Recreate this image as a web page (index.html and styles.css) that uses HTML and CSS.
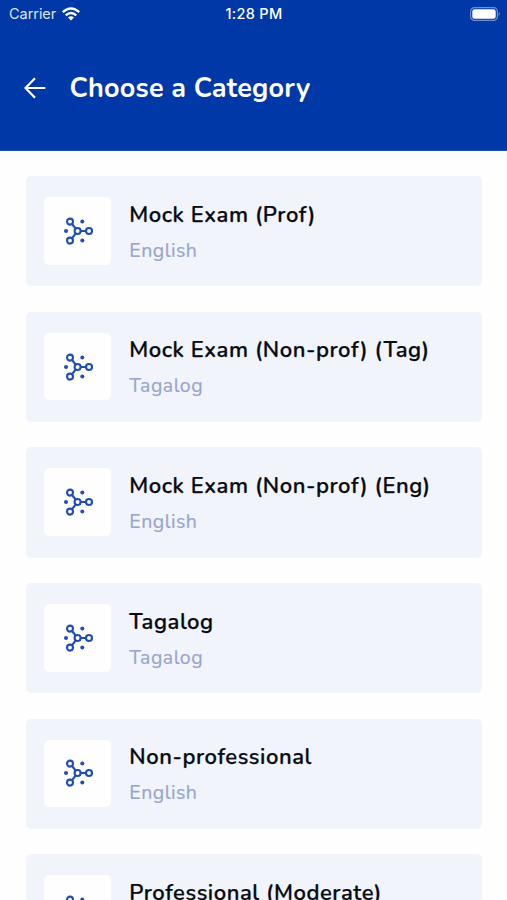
FILE: index.html
```html
<!DOCTYPE html>
<html lang="en">
<head>
<meta charset="utf-8">
<title>Choose a Category</title>
<link rel="stylesheet" href="styles.css">
</head>
<body>
<svg class="sprite" aria-hidden="true">
  <symbol id="nodes" viewBox="0 0 30 30">
    <g fill="none" stroke="#1f4db5" stroke-width="2.1">
      <circle cx="7" cy="5.6" r="3"/><circle cx="7" cy="24.6" r="3"/>
      <circle cx="14.6" cy="15" r="3"/><circle cx="26" cy="15" r="3"/>
      <path d="M9 8 12.7 12.5M9 22.1 12.7 17.5M17.6 15H23"/>
    </g>
    <g fill="#1f4db5"><circle cx="3" cy="15" r="2"/><circle cx="19.3" cy="5.6" r="2"/><circle cx="19.3" cy="24.6" r="2"/></g>
  </symbol>
</svg>
<header class="header">
  <div class="status">
    <div class="carrier"><span>Carrier</span>
      <svg class="wifi" viewBox="0 0 18 14"><g fill="none" stroke="#fff" stroke-width="2.3"><path d="M.8 5.2Q9-2.2 17.2 5.2"/><path d="M3.7 8.3Q9 3.8 14.3 8.3"/></g><path fill="#fff" d="M6 10.4Q9 8 12 10.4L9 13.6Z"/></svg>
    </div>
    <span class="time">1:28 PM</span>
    <svg class="battery" viewBox="0 0 31 14"><rect x=".6" y=".6" width="26.8" height="12.8" rx="4" fill="none" stroke="#6e8dd0" stroke-width="1.2"/><rect x="2.3" y="2.3" width="23.4" height="9.4" rx="2.3" fill="#fff"/><path d="M28.7 5Q31 7 28.7 9Z" fill="#6e8dd0"/></svg>
  </div>
  <div class="bar">
    <svg class="back" viewBox="0 0 22 22"><path d="M21.3 11H1.7M11 1.3 1.5 11 11 20.7" fill="none" stroke="#fff" stroke-width="2.2"/></svg>
    <h1 class="heading">Choose a Category</h1>
  </div>
</header>
<main class="list">
  <article class="card"><div class="tile"><svg class="icon"><use href="#nodes"/></svg></div><div class="info"><h2 class="title">Mock Exam (Prof)</h2><p class="lang">English</p></div></article>
  <article class="card"><div class="tile"><svg class="icon"><use href="#nodes"/></svg></div><div class="info"><h2 class="title">Mock Exam (Non-prof) (Tag)</h2><p class="lang">Tagalog</p></div></article>
  <article class="card"><div class="tile"><svg class="icon"><use href="#nodes"/></svg></div><div class="info"><h2 class="title">Mock Exam (Non-prof) (Eng)</h2><p class="lang">English</p></div></article>
  <article class="card"><div class="tile"><svg class="icon"><use href="#nodes"/></svg></div><div class="info"><h2 class="title">Tagalog</h2><p class="lang">Tagalog</p></div></article>
  <article class="card"><div class="tile"><svg class="icon"><use href="#nodes"/></svg></div><div class="info"><h2 class="title">Non-professional</h2><p class="lang">English</p></div></article>
  <article class="card"><div class="tile"><svg class="icon"><use href="#nodes"/></svg></div><div class="info"><h2 class="title">Professional (Moderate)</h2></div></article>
</main>
</body>
</html>
```
FILE: styles.css
```css
* { box-sizing: border-box; margin: 0; padding: 0; }
html, body { height: 100%; overflow: hidden; }
body { background: #fefefe; font-family: Nunito, "Open Sans", sans-serif; }
svg { display: block; flex: none; }
.sprite { display: none; }
.header { height: 151px; background: #0038a8; color: #fff; border-bottom: 1px solid #1c4db2; }
.status { height: 27px; padding: 0 6px 0 9px; display: grid; grid-template-columns: 1fr auto 1fr; align-items: center; font: 14.5px/27px Inter, sans-serif; }
.carrier { display: flex; align-items: center; gap: 6px; color: #dbe4f7; letter-spacing: -0.05px; }
.wifi { width: 18px; height: 14px; }
.time { font-weight: 500; font-size: 14.5px; letter-spacing: 0.3px; margin-right: 2px; }
.battery { width: 31px; height: 14px; justify-self: end; }
.bar { height: 122px; padding-left: 24px; display: flex; align-items: center; gap: 23.5px; }
.back { width: 22px; height: 22px; }
.heading { font-size: 27px; line-height: 36px; font-weight: 700; letter-spacing: 0.2px; white-space: nowrap; margin-top: 2px; }
.list { padding: 25.3px 25px 0 25.5px; display: flex; flex-direction: column; gap: 25.4px; }
.card { height: 110.2px; flex: none; background: #f1f4fb; border-radius: 5px; padding: 21px 18px 0; display: flex; align-items: flex-start; gap: 18.3px; }
.tile { width: 67.5px; height: 67.5px; flex: none; background: #fefefe; border-radius: 5px; display: flex; align-items: center; justify-content: center; padding-left: 1px; }
.icon { width: 30px; height: 30px; }
.info { white-space: nowrap; margin-top: -0.5px; }
.title { color: #080b12; font-size: 22px; line-height: 36px; font-weight: 600; letter-spacing: 0.55px; -webkit-text-stroke: 0.25px #080b12; }
.lang { color: #98a5cd; font-size: 19.5px; line-height: 36px; font-weight: 400; letter-spacing: 0.5px; -webkit-text-stroke: 0.2px #98a5cd; }
```
